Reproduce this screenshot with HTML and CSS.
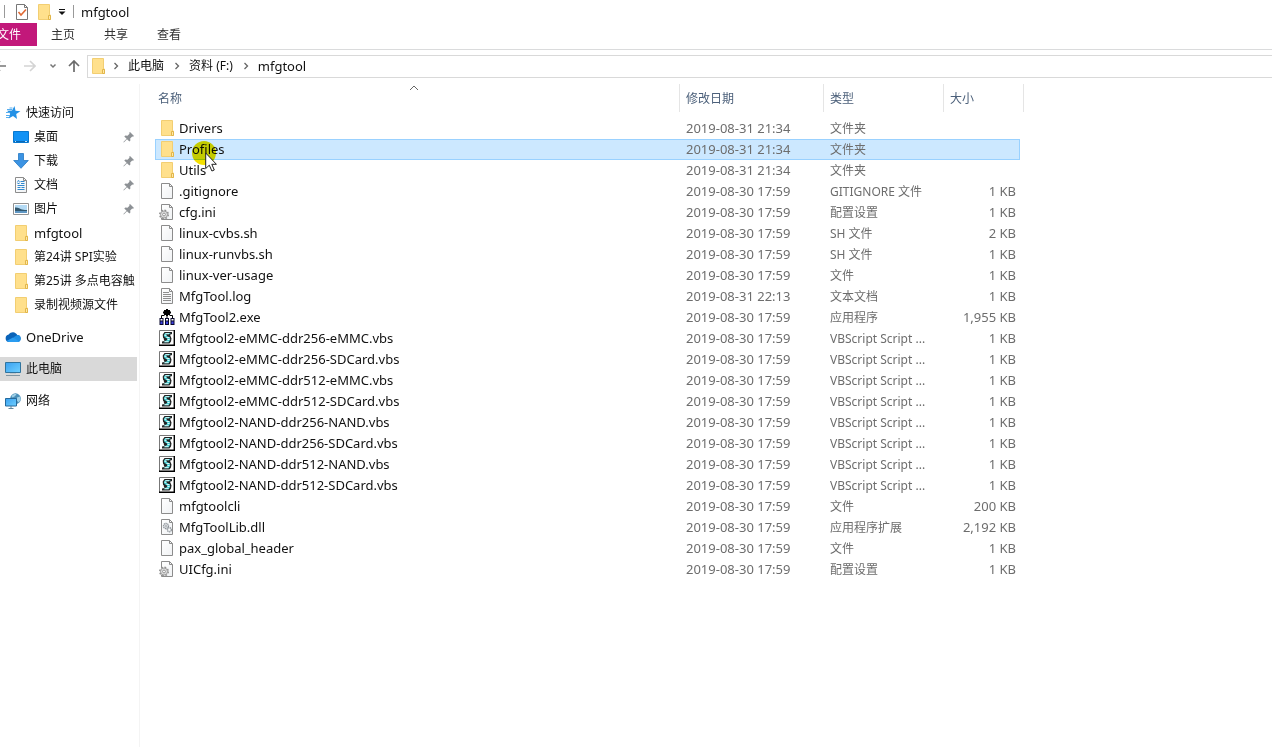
FILE: index.html
```html
<!DOCTYPE html>
<html lang="zh-CN">
<head>
<meta charset="utf-8">
<title>mfgtool</title>
<link rel="stylesheet" href="styles.css">
</head>
<body>
<svg class="sprite" aria-hidden="true">
  <defs>
    <linearGradient id="page-fill" x1="0" y1="0" x2="1" y2="1"><stop offset="0" stop-color="#fff"/><stop offset="1" stop-color="#f0f2f4"/></linearGradient>
    <linearGradient id="screen-fill" x1="0" y1="0" x2="1" y2="1"><stop offset="0" stop-color="#3aa0f0"/><stop offset="1" stop-color="#6fd0ff"/></linearGradient>
  </defs>
  <symbol id="folder" viewBox="0 0 16 16">
    <path d="M2.500.5h11v10.500h1v4.500h-12z" fill="#ffe08c" stroke="#f2ce72"/>
    <path d="M12.500 15.500v-4h2v4z" fill="#ffe9a8" stroke="#e2b64a"/>
  </symbol>
  <symbol id="file" viewBox="0 0 16 16">
    <path d="M2.500.5h8l3 3v12h-11z" fill="url(#page-fill)" stroke="#8c8c8c"/>
    <path d="M10.500.5v3h3" fill="none" stroke="#8c8c8c"/>
  </symbol>
  <symbol id="text" viewBox="0 0 16 16">
    <use href="#file"/>
    <path d="M4 4.500h6M4 6.500h8M4 8.500h8M4 10.500h8M4 12.500h8" stroke="#8e8e8e"/>
  </symbol>
  <symbol id="ini" viewBox="0 0 16 16">
    <use href="#file"/>
    <circle cx="5" cy="10.500" r="4.200" fill="#e8e8e8" stroke="#909090" stroke-width="1.600" stroke-dasharray="1.700 1.600"/>
    <circle cx="5" cy="10.500" r="3.500" fill="#dedede" stroke="#929292" stroke-width=".8"/>
    <circle cx="5" cy="10.500" r="1.400" fill="#fff" stroke="#808080" stroke-width=".8"/>
  </symbol>
  <symbol id="dll" viewBox="0 0 16 16">
    <use href="#file"/>
    <circle cx="7" cy="7" r="2.600" fill="#e3e6e8" stroke="#8c9298" stroke-width="1.200" stroke-dasharray="1.300 .6"/>
    <circle cx="7" cy="7" r="1" fill="#fff" stroke="#8c9298" stroke-width=".7"/>
    <circle cx="10.300" cy="10.700" r="2.100" fill="#e3e6e8" stroke="#8c9298" stroke-width="1.200" stroke-dasharray="1.300 .6"/>
    <circle cx="10.300" cy="10.700" r=".7" fill="#fff"/>
  </symbol>
  <symbol id="exe" viewBox="0 0 16 16">
    <path d="M7 0h2v1h2v1.500h1v2h-1V6H9v1H7V6H5V4.500H4v-2h1V1h2z" fill="#000"/>
    <path d="M8 6v4M2.500 10V6.500h3M10.500 6.500h3V10" fill="none" stroke="#000"/>
    <path d="M.5 9h4v7h-4zM6 9h4v7H6zM11.500 9h4v7h-4z" fill="#08082c"/>
    <path d="M1.500 10h2v1.500h-2zM7 10h2v1.500H7zM12.500 10h2v1.500h-2z" fill="#fff"/>
    <path d="M1.500 12.500h2V15h-2zM7 12.500h2V15H7zM12.500 12.500h2V15h-2z" fill="#3c40e0"/>
  </symbol>
  <symbol id="vbs" viewBox="0 0 16 16">
    <path d="M.5.5h15v15H.5z" fill="#fff" stroke="#777"/>
    <path d="M15.300 0v15.300H0" fill="none" stroke="#000" stroke-width="1.400"/>
    <path d="M5.500 2h7.500v2l-2 .8 1.500 3.700-.5 3-1.500 2H3v-2l2.500-.5L4 7.500l-.3-3z" fill="#222"/>
    <path d="M6.200 3h5.600l-1.600 1.300H7L7.800 6l2.800 1.200.6 2.300-1.400 2.800H4.500l2-1.500 1.800-.8L8 8.600 5.500 7 4.800 5z" fill="#45cdd2"/>
    <path d="M6.500 3.700h3.500M5.500 5.300h2M7.500 7.500h3M8.500 9.500h2M5.500 11.700h4M2.500 8.500h2M2.500 10.500h2" stroke="#eaffff" stroke-width=".9"/>
  </symbol>
  <symbol id="star" viewBox="0 0 16 16">
    <path d="M9.500 1l1 4.700 4.900.6-4.200 2.700.8 5-4-3-4.300 2.400 1.500-4.700L2 5.800l5-.2z" fill="#2391e6"/>
    <path d="M2 4.500h5M1 7.500h4M1 10.500h4M1 12.500h3M4.500 3h3" stroke="#57adee"/>
  </symbol>
  <symbol id="desktop" viewBox="0 0 16 16">
    <path d="M.5 2.500h15v11H.5z" fill="#1192f5" stroke="#0878cf"/>
    <path d="M1 12.500h14" stroke="#0a67b3"/><path d="M2 12.500h1M12 12.500h2" stroke="#bfe3ff"/>
  </symbol>
  <symbol id="download" viewBox="0 0 16 16">
    <path d="M5.500.5h5v7h4.800L8 15.300.7 7.500h4.800z" fill="#3b93e3" stroke="#2478c4" stroke-width=".8"/>
  </symbol>
  <symbol id="document" viewBox="0 0 16 16">
    <use href="#file"/>
    <path d="M7.500 4.500h4M4.500 6.500h2M8 6.500h3.500M4.500 8.500h7M4.500 10.500h3M8.500 10.500h3M4.500 12.500h7" stroke="#3089cf"/>
    <path d="M4.300 5.500l1.200-2.300 1.200 2.300" fill="none" stroke="#3089cf" stroke-width=".8"/>
  </symbol>
  <symbol id="picture" viewBox="0 0 16 16">
    <path d="M.5 2.500h15v11H.5z" fill="#fff" stroke="#929292"/>
    <path d="M2 4h12v8H2z" fill="#b4daf4"/>
    <path d="M2 6.500c3-.5 5 1.500 7 2s4 .5 5 .5v1.500H2z" fill="#33586e"/>
    <path d="M2 10h12v2H2z" fill="#5f97c4"/>
  </symbol>
  <symbol id="cloud" viewBox="0 0 16 16">
    <path d="M4 13a3.800 3.800 0 01-.3-7.500 5 5 0 018.600.6A3.500 3.500 0 0113 13z" fill="#0a63b9"/>
    <path d="M5 13L9 8l3.300-1.900A3.500 3.500 0 0113 13z" fill="#1e8fe5"/>
    <path d="M1.500 12L8 8.500l6.500 4-1.500.5H4z" fill="#2a9cf0"/>
  </symbol>
  <symbol id="pc" viewBox="0 0 16 16">
    <path d="M.5 1.500h15v10H.5z" fill="url(#screen-fill)" stroke="#30749e"/>
    <path d="M1 14.500h14" stroke="#8094a0"/><path d="M5 12.500h6" stroke="#c0c8cc"/>
  </symbol>
  <symbol id="network" viewBox="0 0 16 16">
    <circle cx="10.500" cy="5.700" r="5.400" fill="#4a8fb8"/>
    <path d="M6.500 3c2-2 4-2.500 5-1.500l-2 2-2 1zM12 4.500l3-1 .7 3-2 3-2-2z" fill="#9fcfe6"/>
    <path d="M.5 5.500h11v7.500H.5z" fill="url(#screen-fill)" stroke="#25699b"/>
    <path d="M6 13v2M3.500 15.500h5" stroke="#61869c"/>
  </symbol>
  <symbol id="pin" viewBox="0 0 12 12">
    <path d="M7 1l4 4-1 .8-.8-.3-2 2 .2 2-1 1L4 8.200.8 11.500l-.4-.4L3.600 7.800 1.300 5.500l1-1 2.200.2 2-2L6.200 1.800z" fill="#8d9195"/>
  </symbol>
  <symbol id="check-page" viewBox="0 0 16 16">
    <path d="M2.500.5h8l3 3v12h-11z" fill="#fff" stroke="#777"/>
    <path d="M10.500.5v3h3" fill="none" stroke="#777"/>
    <path d="M4.500 8l2.500 3 5-5.500" fill="none" stroke="#e06a35" stroke-width="1.600"/>
  </symbol>
  <symbol id="chevron" viewBox="0 0 8 8"><path d="M2.500 1l3 3-3 3" fill="none" stroke="#666" stroke-width="1.300"/></symbol>
</svg>

<header class="titlebar">
  <span class="divider"></span>
  <button class="quick" aria-label="属性"><svg class="icon"><use href="#check-page"/></svg></button>
  <button class="quick" aria-label="新建文件夹"><svg class="icon"><use href="#folder"/></svg></button>
  <button class="quick customize" aria-label="自定义快速访问工具栏"><svg viewBox="0 0 8 8"><path d="M1 1.500h6" stroke="#111"/><path d="M.5 3.500h7L4 7z" fill="#111"/></svg></button>
  <span class="divider"></span>
  <h1>mfgtool</h1>
</header>

<nav class="ribbon">
  <button class="tab tab-file">文件</button>
  <button class="tab">主页</button>
  <button class="tab">共享</button>
  <button class="tab">查看</button>
</nav>

<div class="toolbar">
  <button class="nav" aria-label="后退"><svg viewBox="0 0 12 12"><path d="M12 6H1M6 1L1 6l5 5" fill="none" stroke="#777" stroke-width="1.600"/></svg></button>
  <button class="nav" aria-label="前进"><svg viewBox="0 0 12 12"><path d="M0 6h11M6 1l5 5-5 5" fill="none" stroke="#d4d4d4" stroke-width="1.600"/></svg></button>
  <button class="nav history" aria-label="最近位置"><svg viewBox="0 0 8 8"><path d="M1.500 2.500L4 5l2.500-2.500" fill="none" stroke="#777" stroke-width="1.500"/></svg></button>
  <button class="nav" aria-label="上移"><svg viewBox="0 0 12 12"><path d="M6 12V1M1 6l5-5 5 5" fill="none" stroke="#6b6b6b" stroke-width="1.700"/></svg></button>
  <div class="address">
    <svg class="icon"><use href="#folder"/></svg>
    <svg class="chevron"><use href="#chevron"/></svg>
    <button>此电脑</button>
    <svg class="chevron"><use href="#chevron"/></svg>
    <button>资料 (F:)</button>
    <svg class="chevron"><use href="#chevron"/></svg>
    <button class="latin">mfgtool</button>
  </div>
</div>

<div class="explorer">
  <nav class="sidebar">
    <a class="root" href="#"><svg class="icon"><use href="#star"/></svg><span>快速访问</span></a>
    <a href="#"><svg class="icon"><use href="#desktop"/></svg><span>桌面</span><svg class="pin"><use href="#pin"/></svg></a>
    <a href="#"><svg class="icon"><use href="#download"/></svg><span>下载</span><svg class="pin"><use href="#pin"/></svg></a>
    <a href="#"><svg class="icon"><use href="#document"/></svg><span>文档</span><svg class="pin"><use href="#pin"/></svg></a>
    <a href="#"><svg class="icon"><use href="#picture"/></svg><span>图片</span><svg class="pin"><use href="#pin"/></svg></a>
    <a href="#"><svg class="icon"><use href="#folder"/></svg><span class="latin">mfgtool</span></a>
    <a href="#"><svg class="icon"><use href="#folder"/></svg><span>第24讲 SPI实验</span></a>
    <a href="#"><svg class="icon"><use href="#folder"/></svg><span>第25讲 多点电容触</span></a>
    <a href="#"><svg class="icon"><use href="#folder"/></svg><span>录制视频源文件</span></a>
    <a class="root group" href="#"><svg class="icon"><use href="#cloud"/></svg><span class="latin">OneDrive</span></a>
    <a class="root group current" href="#"><svg class="icon"><use href="#pc"/></svg><span>此电脑</span></a>
    <a class="root group" href="#"><svg class="icon"><use href="#network"/></svg><span>网络</span></a>
  </nav>

  <main class="files">
    <table>
      <colgroup><col class="c-name"><col class="c-date"><col class="c-type"><col class="c-size"><col class="c-end"></colgroup>
      <thead>
        <tr><th>名称<svg class="sort" viewBox="0 0 10 6"><path d="M1 5l4-4 4 4" fill="none" stroke="#666"/></svg></th><th>修改日期</th><th>类型</th><th colspan="2">大小</th></tr>
      </thead>
      <tbody>
        <tr><td><svg class="icon"><use href="#folder"/></svg>Drivers</td><td>2019-08-31 21:34</td><td>文件夹</td><td></td></tr>
        <tr class="selected"><td><svg class="icon"><use href="#folder"/></svg>Profiles<span class="halo"></span><svg class="pointer" viewBox="0 0 12 20"><path d="M.7 1v15.500l3.600-3.300 2.600 5.800 2.400-1-2.500-5.700h4.600z" fill="#fff" stroke="#222"/></svg></td><td>2019-08-31 21:34</td><td>文件夹</td><td></td></tr>
        <tr><td><svg class="icon"><use href="#folder"/></svg>Utils</td><td>2019-08-31 21:34</td><td>文件夹</td><td></td></tr>
        <tr><td><svg class="icon"><use href="#file"/></svg>.gitignore</td><td>2019-08-30 17:59</td><td>GITIGNORE 文件</td><td>1 KB</td></tr>
        <tr><td><svg class="icon"><use href="#ini"/></svg>cfg.ini</td><td>2019-08-30 17:59</td><td>配置设置</td><td>1 KB</td></tr>
        <tr><td><svg class="icon"><use href="#file"/></svg>linux-cvbs.sh</td><td>2019-08-30 17:59</td><td>SH 文件</td><td>2 KB</td></tr>
        <tr><td><svg class="icon"><use href="#file"/></svg>linux-runvbs.sh</td><td>2019-08-30 17:59</td><td>SH 文件</td><td>1 KB</td></tr>
        <tr><td><svg class="icon"><use href="#file"/></svg>linux-ver-usage</td><td>2019-08-30 17:59</td><td>文件</td><td>1 KB</td></tr>
        <tr><td><svg class="icon"><use href="#text"/></svg>MfgTool.log</td><td>2019-08-31 22:13</td><td>文本文档</td><td>1 KB</td></tr>
        <tr><td><svg class="icon"><use href="#exe"/></svg>MfgTool2.exe</td><td>2019-08-30 17:59</td><td>应用程序</td><td>1,955 KB</td></tr>
        <tr><td><svg class="icon"><use href="#vbs"/></svg>Mfgtool2-eMMC-ddr256-eMMC.vbs</td><td>2019-08-30 17:59</td><td>VBScript Script ...</td><td>1 KB</td></tr>
        <tr><td><svg class="icon"><use href="#vbs"/></svg>Mfgtool2-eMMC-ddr256-SDCard.vbs</td><td>2019-08-30 17:59</td><td>VBScript Script ...</td><td>1 KB</td></tr>
        <tr><td><svg class="icon"><use href="#vbs"/></svg>Mfgtool2-eMMC-ddr512-eMMC.vbs</td><td>2019-08-30 17:59</td><td>VBScript Script ...</td><td>1 KB</td></tr>
        <tr><td><svg class="icon"><use href="#vbs"/></svg>Mfgtool2-eMMC-ddr512-SDCard.vbs</td><td>2019-08-30 17:59</td><td>VBScript Script ...</td><td>1 KB</td></tr>
        <tr><td><svg class="icon"><use href="#vbs"/></svg>Mfgtool2-NAND-ddr256-NAND.vbs</td><td>2019-08-30 17:59</td><td>VBScript Script ...</td><td>1 KB</td></tr>
        <tr><td><svg class="icon"><use href="#vbs"/></svg>Mfgtool2-NAND-ddr256-SDCard.vbs</td><td>2019-08-30 17:59</td><td>VBScript Script ...</td><td>1 KB</td></tr>
        <tr><td><svg class="icon"><use href="#vbs"/></svg>Mfgtool2-NAND-ddr512-NAND.vbs</td><td>2019-08-30 17:59</td><td>VBScript Script ...</td><td>1 KB</td></tr>
        <tr><td><svg class="icon"><use href="#vbs"/></svg>Mfgtool2-NAND-ddr512-SDCard.vbs</td><td>2019-08-30 17:59</td><td>VBScript Script ...</td><td>1 KB</td></tr>
        <tr><td><svg class="icon"><use href="#file"/></svg>mfgtoolcli</td><td>2019-08-30 17:59</td><td>文件</td><td>200 KB</td></tr>
        <tr><td><svg class="icon"><use href="#dll"/></svg>MfgToolLib.dll</td><td>2019-08-30 17:59</td><td>应用程序扩展</td><td>2,192 KB</td></tr>
        <tr><td><svg class="icon"><use href="#file"/></svg>pax_global_header</td><td>2019-08-30 17:59</td><td>文件</td><td>1 KB</td></tr>
        <tr><td><svg class="icon"><use href="#ini"/></svg>UICfg.ini</td><td>2019-08-30 17:59</td><td>配置设置</td><td>1 KB</td></tr>
      </tbody>
    </table>
  </main>
</div>
</body>
</html>
```

FILE: styles.css
```css
* { box-sizing: border-box; }

body {
  margin: 0;
  min-height: 100vh;
  display: flex;
  flex-direction: column;
  overflow: hidden;
  background: #fff;
  color: #111;
  font: 12px/20px "Noto Sans", "Noto Sans CJK SC", sans-serif;
}

button {
  padding: 0;
  border: 0;
  background: none;
  color: inherit;
  font: inherit;
}

svg { display: block; flex: none; }
.sprite { position: absolute; width: 0; height: 0; }
.icon { width: 16px; height: 16px; }
.latin, .address .latin { font-size: 13px; }

.titlebar {
  display: flex;
  align-items: center;
  height: 23px;
  padding-left: 4px;
}
.titlebar h1 { margin: 0 0 0 7px; font-size: 13px; font-weight: 400; }
.divider { width: 1px; height: 13px; background: #999; }
.quick { margin-left: 9px; }
.quick + .quick { margin-left: 6px; }
.quick.customize { margin: 0 7px 0 6px; }
.customize svg { width: 8px; height: 8px; }

.ribbon {
  display: flex;
  height: 27px;
  padding-bottom: 3px;
  border-bottom: 1px solid #dadbdc;
}
.tab { padding: 1px 14px 0; color: #333; }
.tab:nth-child(n+3) { margin-left: 1px; }
.tab-file {
  margin-left: -19px;
  padding: 1px 16px 0;
  background: #c2187a;
  color: #fff;
}

.toolbar {
  display: flex;
  align-items: center;
  height: 34px;
  padding-bottom: 2px;
}
.nav svg { width: 12px; height: 12px; }
.nav:first-child { margin-left: -6px; }
.nav + .nav { margin-left: 18px; }
.nav.history svg { width: 8px; height: 8px; }
.nav.history + .nav { margin-left: 11px; }
.nav + .nav.history { margin-left: 13px; }

.address {
  flex: 1;
  display: flex;
  align-items: center;
  height: 23px;
  margin-left: 7px;
  padding-left: 2px;
  border: 1px solid #d9d9d9;
  border-right: 0;
}
.chevron { width: 8px; height: 8px; margin: 0 8px 0 9px; }
.icon + .chevron { margin-left: 6px; }

.explorer { flex: 1; display: flex; }

.sidebar {
  width: 140px;
  padding: 17px 2px 0 0;
  border-right: 1px solid #f4f4f4;
}
.sidebar a {
  display: flex;
  align-items: center;
  gap: 5px;
  height: 24px;
  padding-left: 13px;
  color: #111;
  text-decoration: none;
  white-space: nowrap;
}
.sidebar span { flex: 1; min-width: 0; overflow: hidden; }
.sidebar .root { padding-left: 5px; }
.sidebar .group { margin-top: 8px; }
.sidebar .current { background: #d9d9d9; }
.pin { width: 12px; height: 12px; margin-right: 2px; }

.files { flex: 1; padding-left: 15px; }

table {
  width: 869px;
  table-layout: fixed;
  border-collapse: separate;
  border-spacing: 0;
}
.c-date { width: 144px; }
.c-type { width: 120px; }
.c-size { width: 76px; }
.c-end { width: 4px; }

th {
  position: relative;
  height: 28px;
  padding: 2px 0 0 6px;
  border-right: 1px solid #e5e5e5;
  color: #4c607a;
  font-weight: 400;
  text-align: left;
}
th:first-child { padding-left: 3px; }
.sort {
  position: absolute;
  top: 1px;
  left: 0;
  right: 6px;
  width: 10px;
  height: 6px;
  margin: 0 auto;
}

tbody::before { content: ""; display: block; height: 6px; }
td {
  height: 21px;
  padding: 0 0 0 6px;
  border: 0 solid #99d1ff;
  color: #6d6d6d;
  line-height: 19px;
  white-space: nowrap;
}
td:first-child {
  position: relative;
  padding-left: 4px;
  color: #111;
}
td:nth-child(odd) { font-size: 12px; }
td:first-child, td:nth-child(even) { font-size: 13px; }
td .icon { display: inline-block; margin: 1px 4px 0 0; vertical-align: top; }
td:nth-child(4) { padding: 0 4px 0 0; text-align: right; }

.selected td { background: #cce8ff; border-width: 1px 0; }
.selected td:first-child { border-left-width: 1px; padding-left: 3px; }
.selected td:last-child { border-right-width: 1px; }

.halo {
  position: absolute;
  top: 1px;
  left: 36px;
  width: 24px;
  height: 24px;
  border-radius: 50%;
  background: #f4e000;
  mix-blend-mode: multiply;
}
.pointer {
  position: absolute;
  z-index: 1;
  top: 12px;
  left: 49px;
  width: 12px;
  height: 20px;
}
```
